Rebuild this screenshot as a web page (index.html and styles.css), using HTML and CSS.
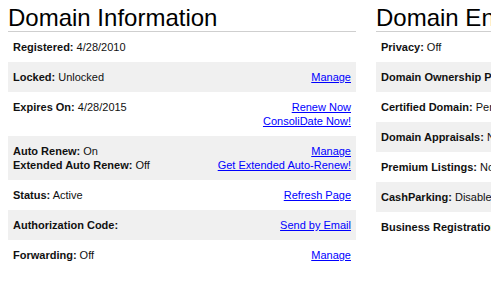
FILE: index.html
```html
<!DOCTYPE html>
<html>
<head>
<meta charset="utf-8">
<link rel="stylesheet" href="styles.css">
</head>
<body>
<div class="panels">
  <section class="panel">
    <h1 class="title">Domain Information</h1>
    <div class="row">
      <div class="info"><div><b>Registered:</b> 4/28/2010</div></div>
    </div>
    <div class="row alt">
      <div class="info"><div><b>Locked:</b> Unlocked</div></div>
      <div class="links"><a href="#">Manage</a></div>
    </div>
    <div class="row">
      <div class="info"><div><b>Expires On:</b> 4/28/2015</div></div>
      <div class="links"><a href="#">Renew Now</a><a href="#">ConsoliDate Now!</a></div>
    </div>
    <div class="row alt">
      <div class="info"><div><b>Auto Renew:</b> On</div><div><b>Extended Auto Renew:</b> Off</div></div>
      <div class="links"><a href="#">Manage</a><a href="#">Get Extended Auto-Renew!</a></div>
    </div>
    <div class="row">
      <div class="info"><div><b>Status:</b> Active</div></div>
      <div class="links"><a href="#">Refresh Page</a></div>
    </div>
    <div class="row alt">
      <div class="info"><div><b>Authorization Code:</b></div></div>
      <div class="links"><a href="#">Send by Email</a></div>
    </div>
    <div class="row">
      <div class="info"><div><b>Forwarding:</b> Off</div></div>
      <div class="links"><a href="#">Manage</a></div>
    </div>
  </section>
  <section class="panel">
    <h1 class="title">Domain Enhancements</h1>
    <div class="row">
      <div class="info"><div><b>Privacy:</b> Off</div></div>
      <div class="links"><a href="#">Manage</a></div>
    </div>
    <div class="row alt">
      <div class="info"><div><b>Domain Ownership Protection:</b> Off</div></div>
      <div class="links"><a href="#">Manage</a></div>
    </div>
    <div class="row">
      <div class="info"><div><b>Certified Domain:</b> Pending</div></div>
      <div class="links"><a href="#">Manage</a></div>
    </div>
    <div class="row alt">
      <div class="info"><div><b>Domain Appraisals:</b> None</div></div>
      <div class="links"><a href="#">Get Appraisal</a></div>
    </div>
    <div class="row">
      <div class="info"><div><b>Premium Listings:</b> Not Listed</div></div>
      <div class="links"><a href="#">Manage</a></div>
    </div>
    <div class="row alt">
      <div class="info"><div><b>CashParking:</b> Disabled</div></div>
      <div class="links"><a href="#">Manage</a></div>
    </div>
    <div class="row">
      <div class="info"><div><b>Business Registration:</b> Off</div></div>
      <div class="links"><a href="#">Manage</a></div>
    </div>
  </section>
</div>
</body>
</html>
```

FILE: styles.css
```css
html, body {
  margin: 0;
  padding: 0;
  background: #fff;
  overflow: hidden;
}
body {
  padding: 0 8px;
  font-family: "Liberation Sans", Arial, sans-serif;
  font-size: 11px;
  color: #111;
}
.panels {
  display: grid;
  grid-template-columns: 348px 348px;
  column-gap: 20px;
  width: 716px;
}
.title {
  margin: 0;
  padding-top: 4px;
  font-size: 24px;
  font-weight: normal;
  line-height: 27px;
  color: #000;
  border-bottom: 1px solid #cfcfcf;
  white-space: nowrap;
}
.row {
  display: flex;
  justify-content: space-between;
  align-items: flex-start;
  padding: 8px 5px;
  line-height: 14px;
}
.row.alt {
  background: #f0f0f0;
}
.info {
  white-space: nowrap;
}
.info b {
  font-weight: bold;
}
.links {
  display: flex;
  flex-direction: column;
  align-items: flex-end;
  white-space: nowrap;
}
.links a {
  color: #0000ff;
  text-decoration: underline;
}
```
